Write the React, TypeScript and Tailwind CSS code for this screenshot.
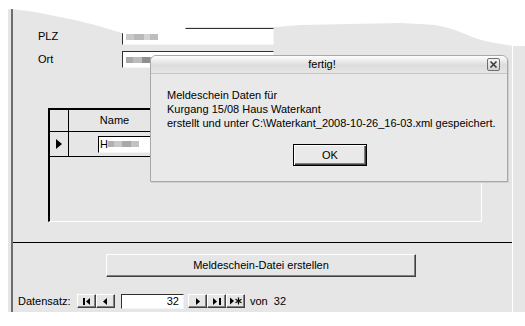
import React from "react";

const font = { fontFamily: '"Liberation Sans", Arial, sans-serif' };

function Smudge({ widths }: { widths: [number, string][] }) {
  return (
    <div className="flex items-center h-full">
      {widths.map(([w, c], i) => (
        <div key={i} className="h-[6px] blur-[0.6px]" style={{ width: w, background: c }} />
      ))}
    </div>
  );
}

function NavBtn({ children }: { children: React.ReactNode }) {
  return (
    <div className="w-[19px] h-[14px] flex items-center justify-center border border-t-white border-l-white border-b-[#404040] border-r-[#404040] shadow-[inset_-1px_-1px_0_#808080] bg-[#e6e6e6]">
      {children}
    </div>
  );
}

export default function App() {
  return (
    <div className="relative w-[525px] h-[326px] bg-white overflow-hidden text-[11px] text-black" style={font}>
      {/* WINDOW */}
      <div className="ml-[8px] w-[517px] h-[312px] bg-[#e6e6e6] flex">
        <div className="w-[3px]" />
        <div className="flex-1 flex flex-col border-l-2 border-[#6e6e6e] border-r border-r-white">
          {/* FORM FIELDS */}
          <div className="pt-[28px] flex flex-col gap-[6px]">
            <div className="flex items-center h-[17px]">
              <span className="ml-[25px] w-[84px]">PLZ</span>
              <div className="w-[152px] h-[17px] bg-white border border-t-[#303030] border-l-[#303030] border-b-[#f4f4f4] border-r-[#f4f4f4] pl-[3px]">
                <Smudge widths={[[8, "#c9c9c9"], [10, "#b9b9b9"], [6, "#d4d4d4"], [8, "#bdbdbd"]]} />
              </div>
            </div>
            <div className="flex items-center h-[17px]">
              <span className="ml-[25px] w-[84px]">Ort</span>
              <div className="w-[152px] h-[17px] bg-white border border-t-[#303030] border-l-[#303030] border-b-[#f4f4f4] border-r-[#f4f4f4] pl-[3px]">
                <Smudge widths={[[7, "#a9a9a9"], [9, "#bcbcbc"], [8, "#8f8f8f"], [6, "#b4b4b4"]]} />
              </div>
            </div>
          </div>

          {/* SUBFORM */}
          <div className="mt-[40px] ml-[35px] w-[434px] h-[114px] border-t-2 border-l-2 border-t-black border-l-black border-b border-r border-b-white border-r-white">
            <div className="flex h-[22px] border-b border-black">
              <div className="w-[19px] border-r border-black" />
              <div className="w-[92px] flex items-center justify-center border-r border-black">Name</div>
            </div>
            <div className="flex h-[25px] border-b border-black">
              <div className="w-[19px] border-r border-black flex items-center justify-center">
                <svg width="6" height="10" viewBox="0 0 6 10">
                  <path d="M0 0 L6 5 L0 10 Z" fill="#000" />
                </svg>
              </div>
              <div className="flex items-center pl-[29px]">
                <div className="w-[80px] h-[17px] bg-white border border-t-black border-l-black border-b-[#f4f4f4] border-r-[#f4f4f4] flex items-center pl-[1px]">
                  <span>H</span>
                  <Smudge widths={[[6, "#b0b0b0"], [8, "#c8c8c8"], [9, "#a8a8a8"], [8, "#c2c2c2"]]} />
                </div>
              </div>
            </div>
          </div>

          {/* SEPARATOR */}
          <div className="mt-[20px] border-t border-black" />

          {/* ACTION BUTTON */}
          <div className="mt-[11px] ml-[93px] w-[310px] h-[23px] flex items-center justify-center border border-t-white border-l-white border-b-[#404040] border-r-[#404040] shadow-[inset_-1px_-1px_0_#808080]">
            Meldeschein-Datei erstellen
          </div>

          {/* RECORD NAVIGATION */}
          <div className="mt-[17px] h-[14px] flex items-center">
            <span className="ml-[5px] w-[59px]">Datensatz:</span>
            <NavBtn>
              <svg width="8" height="7" viewBox="0 0 8 7">
                <rect x="0" y="0" width="2" height="7" fill="#000" />
                <path d="M7 0 L3 3.5 L7 7 Z" fill="#000" />
              </svg>
            </NavBtn>
            <NavBtn>
              <svg width="5" height="7" viewBox="0 0 5 7">
                <path d="M4 0 L0 3.5 L4 7 Z" fill="#000" />
              </svg>
            </NavBtn>
            <div className="ml-[6px] w-[63px] h-[15px] bg-white border border-t-[#303030] border-l-[#303030] border-b-[#f4f4f4] border-r-[#f4f4f4] text-right pr-[4px] leading-[13px]">
              32
            </div>
            <div className="ml-[4px] flex">
              <NavBtn>
                <svg width="5" height="7" viewBox="0 0 5 7">
                  <path d="M1 0 L5 3.5 L1 7 Z" fill="#000" />
                </svg>
              </NavBtn>
              <NavBtn>
                <svg width="8" height="7" viewBox="0 0 8 7">
                  <path d="M0 0 L4 3.5 L0 7 Z" fill="#000" />
                  <rect x="6" y="0" width="2" height="7" fill="#000" />
                </svg>
              </NavBtn>
              <NavBtn>
                <svg width="12" height="8" viewBox="0 0 12 8">
                  <path d="M0 0.5 L4 4 L0 7.5 Z" fill="#000" />
                  <path d="M8.5 0.5 V7.5 M5.5 2.2 L11.5 5.8 M11.5 2.2 L5.5 5.8" stroke="#000" strokeWidth="1.2" />
                </svg>
              </NavBtn>
            </div>
            <span className="ml-[5px]">von&nbsp; 32</span>
          </div>
        </div>
        <div className="w-[12px]" />
      </div>

      {/* TORN TOP EDGE */}
      <svg className="absolute left-0 top-0" width="525" height="60" viewBox="0 0 525 60">
        <path
          d="M0 0 H525 V46 H513 L505 44.5 L495 43 L485 41 L475 38 L465 34 L455 30 L445 27 L435 25 L420 24 L400 23 L350 24 L300 25 L276 27 L186 27 L184 32 L160 33.5 L125 34 L115 31 L95 25 L75 20 L55 16 L35 12 L20 10 L12 9 L0 9 Z"
          fill="#fff"
        />
      </svg>

      {/* DIALOG */}
      <div className="absolute left-[150px] top-[55px] w-[358px] h-[127px] flex flex-col border border-[#a8a8a8] rounded-t-[6px] bg-[#e9e9e9] shadow-[1px_1px_0_#cfcfcf]">
        <div className="h-[18px] flex items-center rounded-t-[5px] bg-[linear-gradient(#fdfdfd,#dcdcdc_55%,#e6e6e6)] border-b border-[#c4c4c4]">
          <span className="flex-1 text-center pl-[6px]">fertig!</span>
          <div className="mr-[7px] w-[13px] h-[13px] rounded-[2px] border border-[#6e6e6e] bg-[linear-gradient(#f4f4f4,#d0d0d0)] flex items-center justify-center">
            <svg width="9" height="9" viewBox="0 0 9 9">
              <path d="M1.5 1.5 L7.5 7.5 M7.5 1.5 L1.5 7.5" stroke="#3a3a3a" strokeWidth="1.6" />
            </svg>
          </div>
        </div>
        <div className="pl-[16px] pt-[14px] leading-[14px] flex flex-col">
          <span>Meldeschein Daten für</span>
          <span>Kurgang 15/08 Haus Waterkant</span>
          <span>erstellt und unter C:\Waterkant_2008-10-26_16-03.xml gespeichert.</span>
        </div>
        <div className="mt-[14px] self-center ml-[2px] w-[74px] h-[22px] border border-black flex items-center justify-center shadow-[inset_1px_1px_0_#fff,inset_-1px_-1px_0_#404040,inset_-2px_-2px_0_#808080]">
          OK
        </div>
      </div>
    </div>
  );
}
